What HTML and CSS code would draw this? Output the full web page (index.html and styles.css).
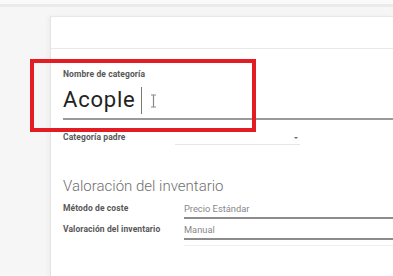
FILE: index.html
```html
<!DOCTYPE html>
<html lang="es">
<head>
    <meta charset="UTF-8">
    <meta name="viewport" content="width=device-width, initial-scale=1.0">
    <title>Categoría de producto</title>
    <link rel="stylesheet" href="styles.css">
</head>
<body>

    <div class="topbar"></div>

    <div class="page">
        <div class="card">
            <div class="cardHead"></div>

            <div class="cardBody">
                <div class="nameField">
                    <div class="highlight"></div>
                    <div class="fieldLabel">Nombre de categoría</div>
                    <div class="nameInput">
                        <span class="nameText">Acople</span><span class="caret"></span>
                        <svg class="ibeam" width="7" height="14" viewBox="0 0 7 14">
                            <path d="M1 1h5M3.5 1v12M1 13h5" stroke="#8a8a8a" stroke-width="1.2" fill="none"/>
                        </svg>
                    </div>
                </div>

                <div class="parentRow">
                    <div class="fieldLabel parentLabel">Categoría padre</div>
                    <div class="select"><span class="arrow"></span></div>
                </div>

                <div class="sectionTitle">Valoración del inventario</div>

                <div class="row">
                    <div class="fieldLabel rowLabel">Método de coste</div>
                    <div class="rowValue">Precio Estándar</div>
                </div>
                <div class="row">
                    <div class="fieldLabel rowLabel">Valoración del inventario</div>
                    <div class="rowValue">Manual</div>
                </div>
                <div class="faintLine"></div>
            </div>
        </div>
    </div>

</body>
</html>
```

FILE: styles.css
```css
body {
    margin: 0;
    background: #f6f6f6;
    font-family: Roboto, "Noto Sans", sans-serif;
    color: #555;
    height: 276px;
    overflow: hidden;
}
.topbar {
    height: 4px;
    background: #fafafa;
    border-bottom: 3px solid #ebebeb;
}
.page {
    padding: 9px 0 0 50px;
}
.card {
    background: #fff;
    border-left: 1px solid #e4e4e4;
    border-top: 1px solid #e8e8e8;
    box-shadow: -2px 0 4px rgba(0, 0, 0, 0.04);
    height: 260px;
}
.cardHead {
    height: 31px;
    border-bottom: 1px solid #e8e8e8;
}
.cardBody {
    padding: 19px 0 0 12px;
}
.fieldLabel {
    font-size: 8.5px;
    font-weight: bold;
    line-height: 12px;
    color: #585858;
    white-space: nowrap;
    letter-spacing: 0.1px;
}
.nameField {
    position: relative;
}
.highlight {
    position: absolute;
    left: -33px;
    top: -9px;
    width: 226px;
    height: 73px;
    box-sizing: border-box;
    border: 4px solid #e31c23;
    z-index: 2;
}
.nameInput {
    display: flex;
    align-items: center;
    margin-top: 7px;
    height: 26px;
    padding-bottom: 5px;
    border-bottom: 2px solid #9a9a9a;
}
.nameText {
    font-size: 22px;
    line-height: 26px;
    color: #222;
    letter-spacing: 0.8px;
}
.caret {
    display: inline-block;
    width: 1px;
    height: 27px;
    margin-left: 5px;
    background: #7a7a7a;
}
.ibeam {
    margin-left: 8px;
    margin-top: 1px;
}
.parentRow {
    display: flex;
    align-items: flex-start;
    margin-top: 11px;
    height: 14px;
}
.parentLabel {
    width: 112px;
}
.select {
    position: relative;
    width: 125px;
    height: 13px;
    border-bottom: 1px solid #e6e6e6;
}
.arrow {
    position: absolute;
    right: 2px;
    top: 6px;
    border-left: 2px solid transparent;
    border-right: 2px solid transparent;
    border-top: 2px solid #666;
}
.sectionTitle {
    margin-top: 32px;
    margin-bottom: 3px;
    font-size: 15px;
    font-weight: 300;
    line-height: 18px;
    color: #6f6f6f;
}
.row {
    display: flex;
    align-items: flex-end;
    padding-top: 4px;
}
.rowLabel {
    width: 121px;
    padding-bottom: 5px;
}
.rowValue {
    flex: 1;
    font-size: 9.3px;
    line-height: 14px;
    color: #888;
    padding-bottom: 1px;
    border-bottom: 2px solid #8c8c8c;
}
.faintLine {
    margin: 5px 0 0 121px;
    border-top: 1px solid #f0f0f0;
}
```
